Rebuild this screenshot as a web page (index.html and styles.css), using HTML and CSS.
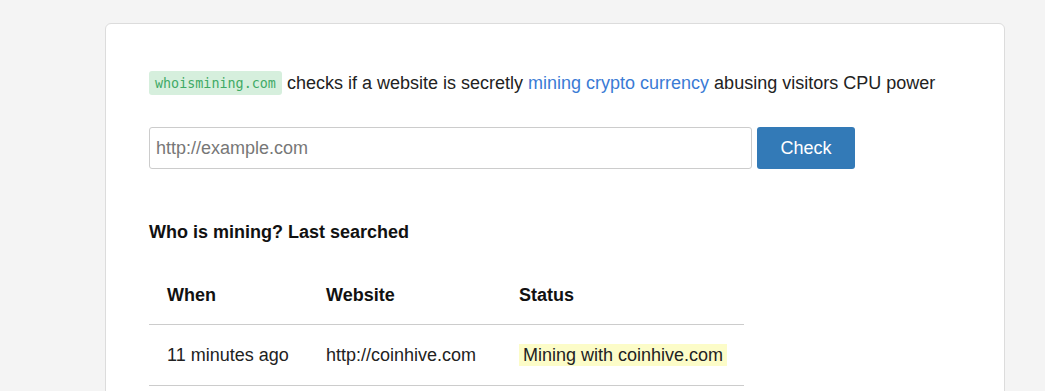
FILE: index.html
```html
<!doctype html>
<html>
    <head>
        <meta charset="UTF-8" />
        <meta name="viewport" content="width=device-width" />
        <title>Who is mining?</title>
        <link rel="stylesheet" href="styles.css">
    </head>
    <body>
        <div class="card">
            <p class="intro">
                <code class="domain">whoismining.com</code> checks if a website is secretly
                <a href="#">mining crypto currency</a> abusing visitors CPU power
            </p>
            <form class="checkForm">
                <input type="text" class="urlInput" placeholder="http://example.com" />
                <button type="button" class="checkBtn">Check</button>
            </form>
            <h4 class="lastTitle">Who is mining? Last searched</h4>
            <table class="lastTable">
                <thead>
                    <tr>
                        <th class="colWhen">When</th>
                        <th class="colSite">Website</th>
                        <th>Status</th>
                    </tr>
                </thead>
                <tbody>
                    <tr>
                        <td>11 minutes ago</td>
                        <td>http://coinhive.com</td>
                        <td><span class="mining">Mining with coinhive.com</span></td>
                    </tr>
                </tbody>
            </table>
        </div>
    </body>
</html>
```

FILE: styles.css
```css
html,
body {
    background-color: #f4f4f4;
}
body {
    margin: 0;
    padding-top: 23px;
    font-family: "Liberation Sans", Arial, sans-serif;
    color: #222;
}
.card {
    width: 855px;
    margin-left: 105px;
    padding: 47px 0 0 43px;
    min-height: 400px;
    background-color: #fff;
    border: 1px solid #dcdcdc;
    border-radius: 6px;
}
.intro {
    margin: 0;
    font-size: 18px;
    line-height: 24px;
}
.intro a {
    color: #3a7bd5;
    text-decoration: none;
}
.domain {
    display: inline-block;
    padding: 2px 6px 0;
    font-family: "DejaVu Sans Mono", monospace;
    font-size: 13.4px;
    line-height: 22px;
    vertical-align: top;
    color: #3faa66;
    background-color: #d6efdd;
    border-radius: 3px;
}
.checkForm {
    display: flex;
    gap: 5px;
    margin-top: 32px;
}
.urlInput {
    width: 603px;
    height: 42px;
    box-sizing: border-box;
    padding: 0 6px;
    font-family: "Liberation Sans", Arial, sans-serif;
    font-size: 18px;
    border: 1px solid #ccc;
    border-radius: 3px;
}
.urlInput::placeholder {
    color: #777;
}
.checkBtn {
    width: 98px;
    height: 42px;
    font-family: "Liberation Sans", Arial, sans-serif;
    font-size: 18px;
    color: #fff;
    background-color: #337ab7;
    border: none;
    border-radius: 3px;
}
.lastTitle {
    margin: 53px 0 0;
    font-size: 18px;
    color: #111;
}
.lastTable {
    width: 595px;
    margin-top: 22px;
    border-collapse: collapse;
    font-size: 18px;
}
.lastTable th {
    text-align: left;
    padding: 20px 0 18px 0;
    color: #111;
    border-bottom: 1px solid #ccc;
}
.lastTable td {
    padding: 20px 0 19px 0;
    border-bottom: 1px solid #ccc;
}
.lastTable th:first-child,
.lastTable td:first-child {
    padding-left: 18px;
    width: 159px;
}
.colSite {
    width: 193px;
}
.mining {
    padding: 1px 4px;
    background-color: #fcfcc8;
}
```
